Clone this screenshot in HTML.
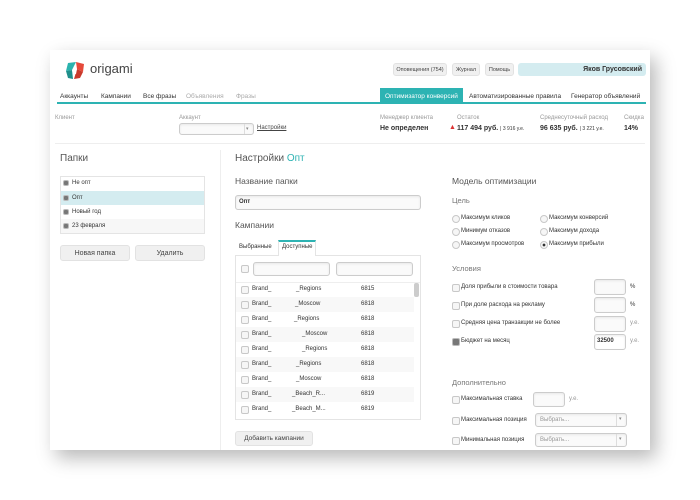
<!DOCTYPE html>
<html><head><meta charset="utf-8"><style>
*{margin:0;padding:0;box-sizing:border-box}
body{width:700px;height:500px;background:#fff;font-family:"Liberation Sans",Arial,sans-serif;color:#333;position:relative;overflow:hidden}
.card{position:absolute;left:50px;top:50px;width:600px;height:400px;background:#fff;box-shadow:6px 8px 18px rgba(0,0,0,.28)}
.a{position:absolute;white-space:nowrap}
.s{font-size:6px;line-height:9px}
.btn{position:absolute;background:#f0f0f0;border:1px solid #e2e2e2;border-radius:3px;font-size:6px;text-align:center;color:#444}
.inp{position:absolute;border:1px solid #ccc;border-radius:3px;background:#fafafa;box-shadow:inset 0 1px 2px rgba(0,0,0,.08)}
.cb{position:absolute;width:8px;height:8px;border:1px solid #c8c8c8;border-radius:2px;background:#f6f6f6}
.rd{position:absolute;width:8px;height:8px;border:1px solid #c8c8c8;border-radius:50%;background:#f6f6f6}
.h{font-size:10px;color:#555}
.g{color:#999}
</style></head><body>
<div class="card"></div>
<svg class="a" style="left:64px;top:61px" width="22" height="20" viewBox="0 0 22 20">
<polygon points="4,2 12,1 8,9 2,10" fill="#2bb3ae"/>
<polygon points="12,1 20,3 19,11 13,8" fill="#e5493a"/>
<polygon points="2,10 8,9 9,18 4,17" fill="#1f8f8b"/>
<polygon points="19,11 13,8 10,18 16,17" fill="#c93a2c"/>
<polygon points="8,9 13,8 12,13 9,13" fill="#fff"/>
</svg>
<div class="a" style="left:90px;top:61px;font-size:13px;color:#444">origami</div>
<div class="btn" style="left:393px;top:63px;width:54px;height:13px;line-height:12px;font-size:5.5px">Оповещения (754)</div>
<div class="btn" style="left:452px;top:63px;width:28px;height:13px;line-height:12px;font-size:5.5px">Журнал</div>
<div class="btn" style="left:485px;top:63px;width:29px;height:13px;line-height:12px;font-size:5.5px">Помощь</div>
<div class="a" style="left:518px;top:63px;width:128px;height:13px;background:#d4ecf0;border-radius:3px;font-size:7px;font-weight:bold;text-align:right;padding-right:4px;line-height:13px">Яков Грусовский</div>
<div class="a" style="left:57px;top:102px;width:589px;height:2px;background:#2db3b3"></div>
<div class="a" style="left:380px;top:88px;width:83px;height:15px;background:#2db3b3"></div>
<div class="a" style="left:60px;top:93px;font-size:6.5px">Аккаунты</div>
<div class="a" style="left:101px;top:93px;font-size:6.5px">Кампании</div>
<div class="a" style="left:143px;top:93px;font-size:6.5px">Все фразы</div>
<div class="a" style="left:186px;top:93px;font-size:6.5px;color:#aaa">Объявления</div>
<div class="a" style="left:236px;top:93px;font-size:6.5px;color:#aaa">Фразы</div>
<div class="a" style="left:385px;top:93px;font-size:6.5px;color:#fff">Оптимизатор конверсий</div>
<div class="a" style="left:469px;top:93px;font-size:6.5px">Автоматизированные правила</div>
<div class="a" style="left:571px;top:93px;font-size:6.5px">Генератор объявлений</div>
<div class="a s g" style="left:55px;top:114px">Клиент</div>
<div class="a s g" style="left:179px;top:114px">Аккаунт</div>
<div class="inp" style="left:179px;top:123px;width:75px;height:12px"></div>
<div class="a" style="left:244px;top:124px;width:1px;height:10px;background:#ddd"></div>
<div class="a" style="left:246px;top:126px;font-size:5px;color:#888">▾</div>
<div class="a s" style="left:257px;top:124px;text-decoration:underline;color:#444">Настройки</div>
<div class="a s g" style="left:380px;top:114px">Менеджер клиента</div>
<div class="a" style="left:380px;top:125px;font-size:7px;font-weight:bold">Не определен</div>
<div class="a s g" style="left:457px;top:114px">Остаток</div>
<div class="a" style="left:449px;top:124px;font-size:7px;color:#d33">▲</div>
<div class="a" style="left:457px;top:125px;font-size:7px;font-weight:bold">117 494 руб. <span style="font-size:5px;font-weight:normal">| 3 916 у.е.</span></div>
<div class="a s g" style="left:540px;top:114px">Среднесуточный расход</div>
<div class="a" style="left:540px;top:125px;font-size:7px;font-weight:bold">96 635 руб. <span style="font-size:5px;font-weight:normal">| 3 221 у.е.</span></div>
<div class="a s g" style="left:624px;top:114px">Скидка</div>
<div class="a" style="left:624px;top:125px;font-size:7px;font-weight:bold">14%</div>
<div class="a" style="left:55px;top:143px;width:590px;height:1px;background:#eee"></div>
<div class="a" style="left:220px;top:150px;width:1px;height:300px;background:#eee"></div>
<div class="a h" style="left:60px;top:153px">Папки</div>
<div class="a" style="left:60px;top:176px;width:145px;height:58px;border:1px solid #e4e4e4"></div>
<div class="a" style="left:61px;top:191px;width:143px;height:14px;background:#d4ecf0"></div>
<div class="a" style="left:61px;top:219px;width:143px;height:14px;background:#f7f7f7"></div>
<div class="cb" style="left:63px;top:180px;background:#777;border-color:#bbb;width:6px;height:6px"></div><div class="a s" style="left:72px;top:179px">Не опт</div>
<div class="cb" style="left:63px;top:195px;background:#777;border-color:#bbb;width:6px;height:6px"></div><div class="a s" style="left:72px;top:194px">Опт</div>
<div class="cb" style="left:63px;top:209px;background:#777;border-color:#bbb;width:6px;height:6px"></div><div class="a s" style="left:72px;top:208px">Новый год</div>
<div class="cb" style="left:63px;top:223px;background:#777;border-color:#bbb;width:6px;height:6px"></div><div class="a s" style="left:72px;top:222px">23 февраля</div>
<div class="btn" style="left:60px;top:245px;width:70px;height:16px;line-height:15px;font-size:7px">Новая папка</div>
<div class="btn" style="left:135px;top:245px;width:70px;height:16px;line-height:15px;font-size:7px">Удалить</div>
<div class="a h" style="left:235px;top:153px">Настройки <span style="color:#2db3b3">Опт</span></div>
<div class="a" style="left:235px;top:176px;font-size:8.5px;color:#555">Название папки</div>
<div class="inp" style="left:235px;top:195px;width:186px;height:15px"></div>
<div class="a s" style="left:239px;top:198px;font-weight:bold">Опт</div>
<div class="a" style="left:235px;top:220px;font-size:8.5px;color:#555">Кампании</div>
<div class="a s" style="left:239px;top:243px">Выбранные</div>
<div class="a" style="left:278px;top:240px;width:38px;height:16px;border:1px solid #e4e4e4;border-top:2px solid #2db3b3;border-bottom:none;background:#fff;z-index:2"></div>
<div class="a s" style="left:282px;top:243px;z-index:3">Доступные</div>
<div class="a" style="left:235px;top:255px;width:186px;height:165px;border:1px solid #e4e4e4"></div>
<div class="cb" style="left:241px;top:265px"></div>
<div class="inp" style="left:253px;top:262px;width:77px;height:14px"></div>
<div class="inp" style="left:336px;top:262px;width:77px;height:14px"></div>
<div class="a" style="left:236px;top:282px;width:184px;height:1px;background:#eee"></div>
<div class="a" style="left:414px;top:283px;width:5px;height:14px;background:#ccc;border-radius:2px"></div>
<div class="a" style="left:236px;top:297px;width:178px;height:15px;background:#f8f8f8"></div>
<div class="a" style="left:236px;top:327px;width:178px;height:15px;background:#f8f8f8"></div>
<div class="a" style="left:236px;top:357px;width:178px;height:15px;background:#f8f8f8"></div>
<div class="a" style="left:236px;top:387px;width:178px;height:15px;background:#f8f8f8"></div>
<div class="cb" style="left:241px;top:286px"></div><div class="a s" style="left:252px;top:285px">Brand_</div><div class="a s" style="left:296px;top:285px">_Regions</div><div class="a s" style="left:361px;top:285px">6815</div>
<div class="cb" style="left:241px;top:301px"></div><div class="a s" style="left:252px;top:300px">Brand_</div><div class="a s" style="left:295px;top:300px">_Moscow</div><div class="a s" style="left:361px;top:300px">6818</div>
<div class="cb" style="left:241px;top:316px"></div><div class="a s" style="left:252px;top:315px">Brand_</div><div class="a s" style="left:294px;top:315px">_Regions</div><div class="a s" style="left:361px;top:315px">6818</div>
<div class="cb" style="left:241px;top:331px"></div><div class="a s" style="left:252px;top:330px">Brand_</div><div class="a s" style="left:302px;top:330px">_Moscow</div><div class="a s" style="left:361px;top:330px">6818</div>
<div class="cb" style="left:241px;top:346px"></div><div class="a s" style="left:252px;top:345px">Brand_</div><div class="a s" style="left:302px;top:345px">_Regions</div><div class="a s" style="left:361px;top:345px">6818</div>
<div class="cb" style="left:241px;top:361px"></div><div class="a s" style="left:252px;top:360px">Brand_</div><div class="a s" style="left:296px;top:360px">_Regions</div><div class="a s" style="left:361px;top:360px">6818</div>
<div class="cb" style="left:241px;top:376px"></div><div class="a s" style="left:252px;top:375px">Brand_</div><div class="a s" style="left:296px;top:375px">_Moscow</div><div class="a s" style="left:361px;top:375px">6818</div>
<div class="cb" style="left:241px;top:391px"></div><div class="a s" style="left:252px;top:390px">Brand_</div><div class="a s" style="left:292px;top:390px">_Beach_R...</div><div class="a s" style="left:361px;top:390px">6819</div>
<div class="cb" style="left:241px;top:406px"></div><div class="a s" style="left:252px;top:405px">Brand_</div><div class="a s" style="left:292px;top:405px">_Beach_M...</div><div class="a s" style="left:361px;top:405px">6819</div>
<div class="btn" style="left:235px;top:431px;width:78px;height:15px;line-height:14px;font-size:6.5px">Добавить кампании</div>
<div class="a" style="left:452px;top:176px;font-size:8.5px;color:#555">Модель оптимизации</div>
<div class="a" style="left:452px;top:196px;font-size:7.5px;color:#777">Цель</div>
<div class="rd" style="left:452px;top:215px"></div><div class="a s" style="left:461px;top:214px">Максимум кликов</div>
<div class="rd" style="left:452px;top:228px"></div><div class="a s" style="left:461px;top:227px">Минимум отказов</div>
<div class="rd" style="left:452px;top:241px"></div><div class="a s" style="left:461px;top:240px">Максимум просмотров</div>
<div class="rd" style="left:540px;top:215px"></div><div class="a s" style="left:549px;top:214px">Максимум конверсий</div>
<div class="rd" style="left:540px;top:228px"></div><div class="a s" style="left:549px;top:227px">Максимум дохода</div>
<div class="rd" style="left:540px;top:241px;background:radial-gradient(#333 30%,#f6f6f6 35%)"></div><div class="a s" style="left:549px;top:240px">Максимум прибыли</div>
<div class="a" style="left:452px;top:264px;font-size:7.5px;color:#777">Условия</div>
<div class="cb" style="left:452px;top:284px"></div><div class="a s" style="left:461px;top:283px">Доля прибыли в стоимости товара</div>
<div class="cb" style="left:452px;top:302px"></div><div class="a s" style="left:461px;top:301px">При доле расхода на рекламу</div>
<div class="cb" style="left:452px;top:320px"></div><div class="a s" style="left:461px;top:319px">Средняя цена транзакции не более</div>
<div class="cb" style="left:452px;top:338px;background:#777;border-color:#bbb"></div><div class="a s" style="left:461px;top:337px">Бюджет на месяц</div>
<div class="inp" style="left:594px;top:279px;width:32px;height:16px"></div><div class="a s" style="left:630px;top:283px">%</div>
<div class="inp" style="left:594px;top:297px;width:32px;height:16px"></div><div class="a s" style="left:630px;top:301px">%</div>
<div class="inp" style="left:594px;top:316px;width:32px;height:16px"></div><div class="a s g" style="left:630px;top:319px">у.е.</div>
<div class="inp" style="left:594px;top:334px;width:32px;height:16px;background:#fff"></div><div class="a s" style="left:597px;top:337px;font-weight:bold">32500</div><div class="a s g" style="left:630px;top:337px">у.е.</div>
<div class="a" style="left:452px;top:378px;font-size:7.5px;color:#777">Дополнительно</div>
<div class="cb" style="left:452px;top:396px"></div><div class="a s" style="left:461px;top:395px">Максимальная ставка</div>
<div class="inp" style="left:533px;top:392px;width:32px;height:15px"></div><div class="a s g" style="left:569px;top:395px">у.е.</div>
<div class="cb" style="left:452px;top:417px"></div><div class="a s" style="left:461px;top:416px">Максимальная позиция</div>
<div class="inp" style="left:535px;top:413px;width:92px;height:14px"></div><div class="a s g" style="left:540px;top:416px">Выбрать...</div><div class="a" style="left:616px;top:414px;width:1px;height:12px;background:#ddd"></div><div class="a" style="left:619px;top:416px;font-size:5px;color:#888">▾</div>
<div class="cb" style="left:452px;top:437px"></div><div class="a s" style="left:461px;top:436px">Минимальная позиция</div>
<div class="inp" style="left:535px;top:433px;width:92px;height:14px"></div><div class="a s g" style="left:540px;top:436px">Выбрать...</div><div class="a" style="left:616px;top:434px;width:1px;height:12px;background:#ddd"></div><div class="a" style="left:619px;top:436px;font-size:5px;color:#888">▾</div>
</body></html>
